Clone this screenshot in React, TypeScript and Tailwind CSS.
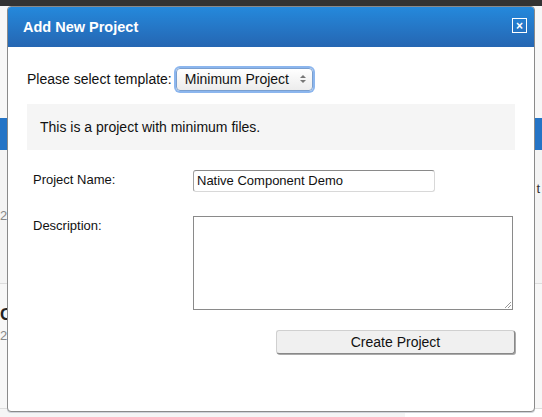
import React from "react";

export default function App() {
  return (
    <div
      className="relative w-[542px] h-[417px] overflow-hidden bg-[#f7f7f7]"
      style={{ fontFamily: '"Liberation Sans", Arial, sans-serif' }}
    >
      {/* background page (behind the dialog) */}
      <div className="flex flex-col w-[542px] h-[417px]">
        <div className="h-[6px] bg-[#333333]" />
        <div className="h-[112px]" />
        <div className="h-[32px] bg-[#2474c6]" />
        <div className="h-[133px] bg-[#f4f4f4] flex justify-between">
          <div className="pt-[56px] text-[13px] text-[#888]">2</div>
          <div className="pt-[29px] pr-[2px] text-[13px] text-[#333]">t</div>
        </div>
        <div className="h-px bg-[#dddddd]" />
        <div className="h-[124px] flex flex-col pt-[22px] leading-none">
          <div className="text-[17px] font-bold text-[#222]">C</div>
          <div className="mt-[6px] text-[13px] text-[#888]">2</div>
        </div>
        <div className="h-px bg-[#dddddd]" />
        <div className="flex-1 flex">
          <div className="w-[405px] bg-[#f5f5f5]" />
          <div className="flex-1 bg-white" />
        </div>
      </div>

      {/* dialog */}
      <div className="absolute left-[7px] top-[6px] w-[528px] h-[406px] rounded-[4px] border border-[#8a8a8a] bg-white overflow-hidden shadow-[0_1px_0_#d0d4da]">
        <div className="h-[40px] bg-gradient-to-b from-[#2489dc] to-[#2566b2] flex items-center justify-between pl-[15px] pr-[7px]">
          <span className="text-white font-bold text-[14.5px] mt-[1px]">Add New Project</span>
          <div className="w-[15px] h-[15px] -mt-[3px] border border-white flex items-center justify-center text-white text-[12px] font-bold leading-none">
            ×
          </div>
        </div>

        <div className="px-[19px] pt-[20px] text-[#111]">
          <div className="flex items-center h-[24px] text-[14px]">
            <span>Please select template:</span>
            <div className="ml-[4px] w-[137px] h-[23px] rounded-[4px] border border-[#7a9fcf] shadow-[0_0_0_2px_#8cb6ee] bg-gradient-to-b from-white to-[#ececec] flex items-center justify-between pl-[8px] pr-[6px]">
              <span>Minimum Project</span>
              <svg width="6" height="10" viewBox="0 0 6 10">
                <path d="M0 4 L3 1 L6 4 Z" fill="#777" />
                <path d="M0 6 L3 9 L6 6 Z" fill="#777" />
              </svg>
            </div>
          </div>

          <div className="mt-[13px] h-[46px] w-[488px] bg-[#f5f5f5] flex items-center pl-[13px] text-[14px]">
            This is a project with minimum files.
          </div>

          <div className="flex mt-[20px] pl-[6px] text-[13px]">
            <div className="w-[160px] pt-[0px]">Project Name:</div>
            <div className="w-[242px] h-[22px] rounded-[3px] border border-[#d8d8d8] border-t-[#8a8a8a] border-l-[#a0a0a0] flex items-center pl-[3px]">
              Native Component Demo
            </div>
          </div>

          <div className="flex mt-[24px] pl-[6px] text-[13px]">
            <div className="w-[160px] pt-0">Description:</div>
            <div className="relative w-[320px] h-[94px] border border-[#8a8a8a]">
              <svg className="absolute right-0 bottom-0" width="8" height="8" viewBox="0 0 8 8">
                <path d="M7 1 L1 7 M7 4 L4 7" stroke="#999" strokeWidth="1" />
              </svg>
            </div>
          </div>

          <div className="flex justify-end mt-[20px]">
            <div className="w-[239px] h-[24px] rounded-[3px] bg-[#f0f0f0] border border-[#d0d0d0] border-b-[#888] border-r-[#888] shadow-[1px_1px_0_#aaa] flex items-center justify-center text-[14px]">
              Create Project
            </div>
          </div>
        </div>
      </div>
    </div>
  );
}
